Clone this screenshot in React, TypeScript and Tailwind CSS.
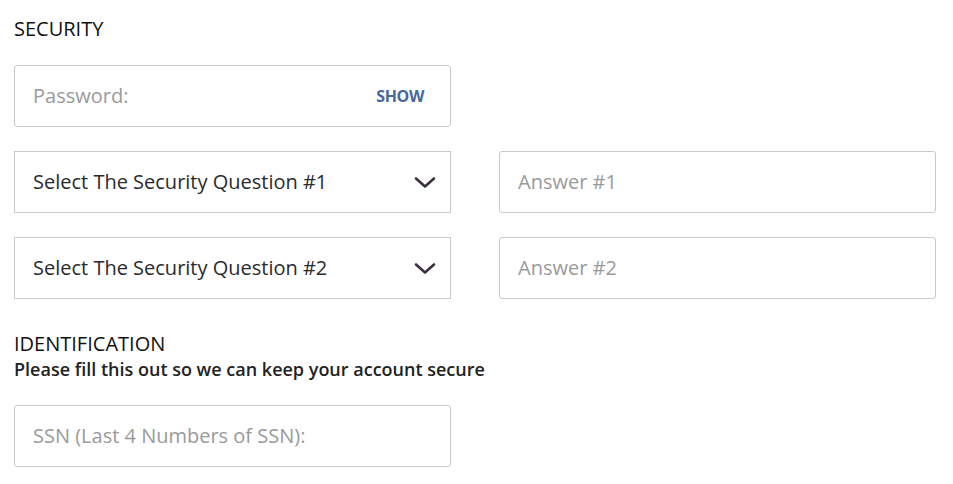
const font = { fontFamily: '"Open Sans", sans-serif' }

function Chevron() {
  return (
    <svg width="22" height="13" viewBox="0 0 22 13" fill="none" className="text-[#3b2f40]">
      <path d="M2 2.5 L11 10.5 L20 2.5" stroke="currentColor" strokeWidth="2.6" strokeLinecap="round" strokeLinejoin="round" />
    </svg>
  )
}

function Field({ placeholder, right }: { placeholder: string; right?: React.ReactNode }) {
  return (
    <div className="flex h-[62px] w-[437px] items-center justify-between rounded-[3px] border border-[#c9c9c9] bg-white pl-[18px] pr-[26px]">
      <span className="text-[20px] text-[#9a9a9a]">{placeholder}</span>
      {right}
    </div>
  )
}

function SelectBox({ label }: { label: string }) {
  return (
    <div className="flex h-[62px] w-[437px] items-center justify-between border border-[#c9c9c9] bg-white pl-[18px] pr-[14px]">
      <span className="text-[20px] text-[#2b2b2b]">{label}</span>
      <Chevron />
    </div>
  )
}

export default function App() {
  return (
    <div className="min-h-[484px] w-[953px] bg-white pl-[14px] pt-[15px]" style={font}>
      <h2 className="text-[20px] leading-[27px] text-[#111]">SECURITY</h2>

      <div className="mt-[23px] flex flex-col gap-[24px]">
        <div className="flex gap-[48px]">
          <Field
            placeholder="Password:"
            right={<span className="text-[16px] font-bold tracking-tight text-[#48679a]">SHOW</span>}
          />
        </div>
        <div className="flex gap-[48px]">
          <SelectBox label="Select The Security Question #1" />
          <Field placeholder="Answer #1" />
        </div>
        <div className="flex gap-[48px]">
          <SelectBox label="Select The Security Question #2" />
          <Field placeholder="Answer #2" />
        </div>
      </div>

      <h2 className="mt-[31px] text-[20px] leading-[27px] text-[#111]">IDENTIFICATION</h2>
      <p className="text-[18px] font-semibold leading-[25px] text-[#222]">Please fill this out so we can keep your account secure</p>

      <div className="mt-[23px]">
        <Field placeholder="SSN (Last 4 Numbers of SSN):" />
      </div>
    </div>
  )
}
